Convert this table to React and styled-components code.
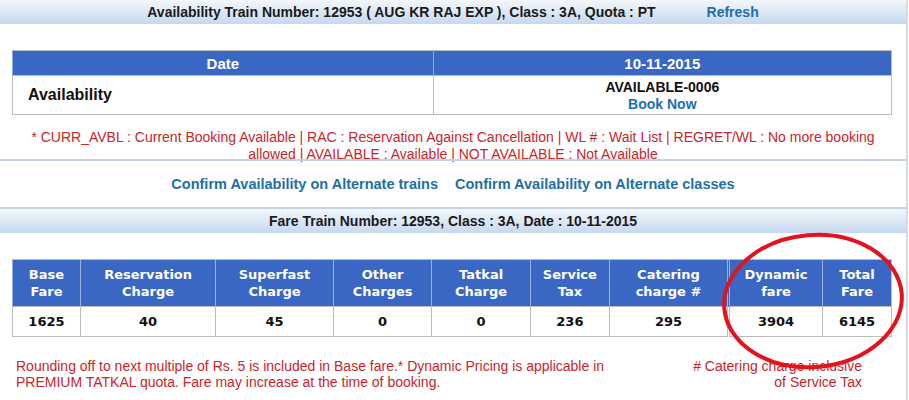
import React from "react";
import styled, { createGlobalStyle } from "styled-components";

const GlobalStyle = createGlobalStyle`
    body {
        margin: 0;
        background: #ffffff;
        font-family: "Liberation Sans", Arial, sans-serif;
    }
`

const Page = styled.div`
    position: relative;
    width: 906px;
    height: 400px;
    border-right: 2px solid #d3dbe5;
    overflow: hidden;
`
const HeaderBar = styled.div`
    height: 24px;
    display: flex;
    justify-content: center;
    align-items: center;
    gap: 51px;
    background: linear-gradient(to bottom, #f3f7fc, #c6d8f0);
    border-top: ${(p) => (p.topLine ? "2px solid #c6d3e2" : "none")};
    font-size: 14px;
    font-weight: bold;
    color: #1a1a1a;
`
const RefreshLink = styled.span`
    color: #1d6fb1;
`
const Spacer = styled.div`
    height: ${(p) => p.h}px;
`
const Table = styled.table`
    margin: 0 12px;
    width: 880px;
    border-collapse: collapse;
    border: 1px solid #bdbdbd;
`
const HeadCell = styled.th`
    background: #3a66c4;
    color: #ffffff;
    font-size: 15px;
    font-weight: bold;
    height: 24px;
    padding: 0;
    border-left: 1px solid #8ea6d8;
    width: ${(p) => p.w}px;
`
const LabelCell = styled.td`
    height: 38px;
    padding: 0 0 0 15px;
    font-size: 16px;
    font-weight: bold;
    color: #111;
    text-align: left;
    border-top: 1px solid #bdbdbd;
`
const ValueCell = styled.td`
    text-align: center;
    font-size: 14px;
    font-weight: bold;
    color: #111;
    line-height: 17px;
    border-top: 1px solid #bdbdbd;
    border-left: 1px solid #bdbdbd;
    padding: 2px 0 0;
`
const BookLink = styled.div`
    color: #1d6fb1;
`
const Legend = styled.p`
    margin: 14px 0 0;
    padding: 0 20px;
    height: 30px;
    text-align: center;
    font-size: 14px;
    line-height: 17px;
    color: #c9252b;
`
const Divider = styled.div`
    position: relative;
    height: 2px;
    background: #c6d3e2;
`
const LinksRow = styled.div`
    height: 46px;
    display: flex;
    justify-content: center;
    align-items: center;
    gap: 17px;
    font-size: 14.5px;
    font-weight: bold;
    color: #1d6fa8;
`
const FareHead = styled.th`
    background: #3a66c4;
    color: #ffffff;
    font-family: "DejaVu Sans", Verdana, sans-serif;
    font-size: 13px;
    font-weight: bold;
    line-height: 17px;
    height: 46px;
    padding: 0;
    border-left: ${(p) => (p.double ? "3px double #9cb0da" : "1px solid #9cb0da")};
    width: ${(p) => p.w}px;
`
const FareCell = styled.td`
    font-family: "DejaVu Sans", Verdana, sans-serif;
    font-size: 13px;
    font-weight: bold;
    color: #111;
    text-align: center;
    height: 29px;
    padding: 0;
    border-top: 1px solid #bdbdbd;
    border-left: ${(p) => (p.double ? "3px double #bdbdbd" : "1px solid #bdbdbd")};
`
const Footer = styled.div`
    display: flex;
    justify-content: space-between;
    padding: 21px 44px 0 16px;
    font-size: 14px;
    line-height: 16px;
    color: #c9252b;
`
const FooterLeft = styled.div`
    width: 610px;
`
const FooterRight = styled.div`
    text-align: right;
`
const Circle = styled.svg`
    position: absolute;
    left: 712px;
    top: 224px;
    pointer-events: none;
`

const fares = [
    { head: ["Base", "Fare"], value: "1625", w: 68 },
    { head: ["Reservation", "Charge"], value: "40", w: 136 },
    { head: ["Superfast", "Charge"], value: "45", w: 118 },
    { head: ["Other", "Charges"], value: "0", w: 99 },
    { head: ["Tatkal", "Charge"], value: "0", w: 99 },
    { head: ["Service", "Tax"], value: "236", w: 79 },
    { head: ["Catering", "charge #"], value: "295", w: 119 },
    { head: ["Dynamic", "fare"], value: "3904", w: 93, double: true },
    { head: ["Total", "Fare"], value: "6145", w: 69 },
]

export default function App() {
    return (
        <Page>
            <GlobalStyle />
            <HeaderBar>
                <span>Availability Train Number: 12953 ( AUG KR RAJ EXP ), Class : 3A, Quota : PT</span>
                <RefreshLink>Refresh</RefreshLink>
            </HeaderBar>
            <Spacer h={26} />
            <Table>
                <thead>
                    <tr>
                        <HeadCell w={421}>Date</HeadCell>
                        <HeadCell w={459}>10-11-2015</HeadCell>
                    </tr>
                </thead>
                <tbody>
                    <tr>
                        <LabelCell>Availability</LabelCell>
                        <ValueCell>
                            AVAILABLE-0006
                            <BookLink>Book Now</BookLink>
                        </ValueCell>
                    </tr>
                </tbody>
            </Table>
            <Legend>
                * CURR_AVBL : Current Booking Available | RAC : Reservation Against Cancellation | WL # : Wait List | REGRET/WL : No more booking allowed | AVAILABLE : Available | NOT AVAILABLE : Not Available
            </Legend>
            <Divider />
            <LinksRow>
                <span>Confirm Availability on Alternate trains</span>
                <span>Confirm Availability on Alternate classes</span>
            </LinksRow>
            <HeaderBar topLine>
                <span>Fare Train Number: 12953, Class : 3A, Date : 10-11-2015</span>
            </HeaderBar>
            <Spacer h={26} />
            <Table>
                <thead>
                    <tr>
                        {fares.map((f) => (
                            <FareHead key={f.head[0]} w={f.w} double={f.double}>
                                {f.head[0]}
                                <br />
                                {f.head[1]}
                            </FareHead>
                        ))}
                    </tr>
                </thead>
                <tbody>
                    <tr>
                        {fares.map((f) => (
                            <FareCell key={f.head[0]} double={f.double}>{f.value}</FareCell>
                        ))}
                    </tr>
                </tbody>
            </Table>
            <Footer>
                <FooterLeft>
                    Rounding off to next multiple of Rs. 5 is included in Base fare.* Dynamic Pricing is applicable in PREMIUM TATKAL quota. Fare may increase at the time of booking.
                </FooterLeft>
                <FooterRight>
                    # Catering charge inclusive
                    <br />
                    of Service Tax
                </FooterRight>
            </Footer>
            <Circle width="200" height="170" viewBox="0 0 200 170">
                <ellipse cx="101" cy="77" rx="89" ry="66" fill="none" stroke="#e3121c" strokeWidth="4" transform="rotate(-5 101 77)" />
            </Circle>
        </Page>
    );
}
